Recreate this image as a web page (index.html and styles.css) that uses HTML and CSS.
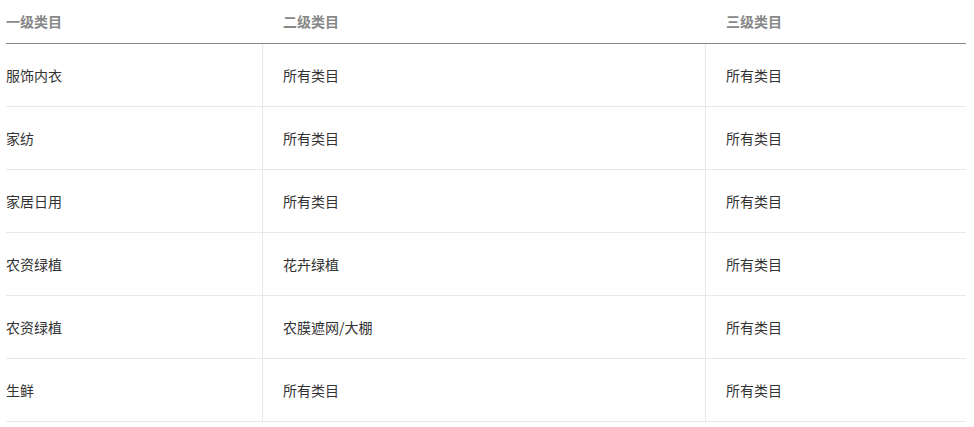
FILE: index.html
```html
<!DOCTYPE html>
<html lang="zh-CN">
<head>
<meta charset="utf-8">
<title>类目</title>
<link rel="stylesheet" href="styles.css">
</head>
<body>
<div class="table">
  <div class="row head">
    <div class="cell c1">一级类目</div>
    <div class="cell c2">二级类目</div>
    <div class="cell c3">三级类目</div>
  </div>
  <div class="row">
    <div class="cell c1">服饰内衣</div>
    <div class="cell c2">所有类目</div>
    <div class="cell c3">所有类目</div>
  </div>
  <div class="row">
    <div class="cell c1">家纺</div>
    <div class="cell c2">所有类目</div>
    <div class="cell c3">所有类目</div>
  </div>
  <div class="row">
    <div class="cell c1">家居日用</div>
    <div class="cell c2">所有类目</div>
    <div class="cell c3">所有类目</div>
  </div>
  <div class="row">
    <div class="cell c1">农资绿植</div>
    <div class="cell c2">花卉绿植</div>
    <div class="cell c3">所有类目</div>
  </div>
  <div class="row">
    <div class="cell c1">农资绿植</div>
    <div class="cell c2">农膜遮网/大棚</div>
    <div class="cell c3">所有类目</div>
  </div>
  <div class="row">
    <div class="cell c1">生鲜</div>
    <div class="cell c2">所有类目</div>
    <div class="cell c3">所有类目</div>
  </div>
</div>
</body>
</html>
```
FILE: styles.css
```css
html, body {
  margin: 0;
  padding: 0;
  background: #fff;
}
body {
  font-family: "Microsoft YaHei", "Noto Sans CJK SC", sans-serif;
  font-size: 14px;
  color: #333;
  padding: 0 6px;
}
.table {
  width: 960px;
}
.row {
  display: grid;
  grid-template-columns: 256px 443px 261px;
  height: 62px;
  border-bottom: 1px solid #e8e8e8;
}
.row.head {
  height: 43px;
  border-bottom: 1px solid #888;
  color: #888;
  font-weight: bold;
}
.cell {
  display: flex;
  align-items: center;
  line-height: 1;
  padding-bottom: 1px;
}
.c2, .c3 {
  padding-left: 20px;
  border-left: 1px solid #e8e8e8;
}
.head .c2, .head .c3 {
  border-left-color: transparent;
}
```
